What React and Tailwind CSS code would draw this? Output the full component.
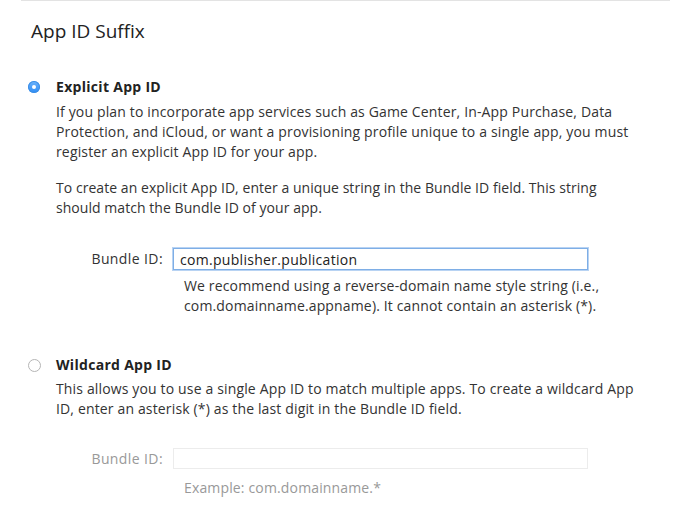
import React from "react";

const FONT = '"Open Sans", "Liberation Sans", sans-serif';

export default function App() {
  return (
    <div className="w-[692px] h-[529px] bg-white overflow-hidden text-[#333] text-[14px] leading-[20px] tracking-[0.15px]" style={{ fontFamily: FONT }}>
      <div className="ml-[21px] w-[649px] border-t border-[#e3e3e3]" />
      <h2 className="ml-[31px] mt-[18px] text-[19px] leading-[24px] tracking-normal text-[#222]">App ID Suffix</h2>

      <div className="mt-[34px] flex">
        <div className="ml-[28px] w-[12px] h-[12px] mt-[4px] rounded-full bg-gradient-to-b from-[#6cb3fa] to-[#2a8cf6] flex items-center justify-center shadow-[inset_0_0_0_1px_#3d8fe6]">
          <div className="w-[4px] h-[4px] rounded-full bg-white" />
        </div>
        <div className="ml-[16px] flex-1 whitespace-nowrap">
          <div className="font-bold tracking-[0.3px] text-[#222]">Explicit App ID</div>
          <p className="mt-[5px]">
            If you plan to incorporate app services such as Game Center, In-App Purchase, Data<br />
            Protection, and iCloud, or want a provisioning profile unique to a single app, you must<br />
            register an explicit App ID for your app.
          </p>
          <p className="mt-[16px] tracking-[0.05px]">
            To create an explicit App ID, enter a unique string in the Bundle ID field. This string<br />
            should match the Bundle ID of your app.
          </p>
          <div className="mt-[30px] flex items-center">
            <label className="w-[107px] text-right tracking-[0.4px]">Bundle ID:</label>
            <input
              readOnly
              value="com.publisher.publication"
              className="ml-[10px] w-[415px] h-[22px] border border-[#7eaee6] shadow-[0_0_0_1px_#b8d3f3] px-[6px] text-[14px] tracking-[0.3px] text-[#222] outline-none"
              style={{ fontFamily: FONT }}
            />
          </div>
          <p className="ml-[128px] mt-[6px]">
            We recommend using a reverse-domain name style string (i.e.,<br />
            com.domainname.appname). It cannot contain an asterisk (*).
          </p>
        </div>
      </div>

      <div className="mt-[39px] flex">
        <div className="ml-[28px] w-[13px] h-[13px] mt-[4px] rounded-full border border-[#b5b5b5] bg-white" />
        <div className="ml-[15px] flex-1 whitespace-nowrap">
          <div className="font-bold tracking-[0.3px] text-[#222]">Wildcard App ID</div>
          <p className="mt-[4px]">
            This allows you to use a single App ID to match multiple apps. To create a wildcard App<br />
            ID, enter an asterisk (*) as the last digit in the Bundle ID field.
          </p>
          <div className="mt-[29px] flex items-center">
            <label className="w-[107px] text-right tracking-[0.4px] text-[#999]">Bundle ID:</label>
            <div className="ml-[10px] w-[415px] h-[21px] border border-[#ececec]" />
          </div>
          <p className="ml-[128px] mt-[9px] text-[#999]">Example: com.domainname.*</p>
        </div>
      </div>
    </div>
  );
}
